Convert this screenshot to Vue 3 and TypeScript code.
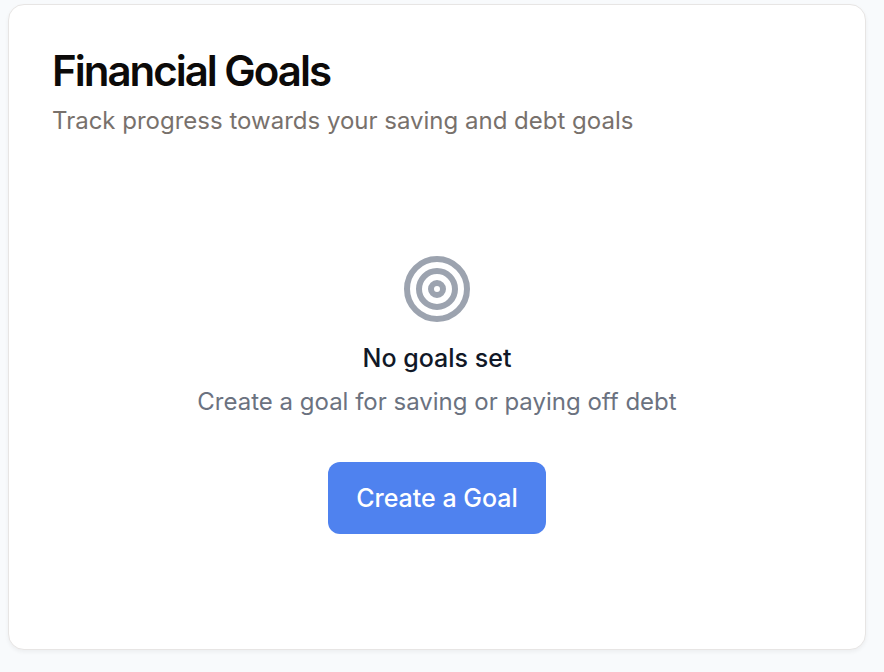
<script setup lang="ts">
const title: string = 'Financial Goals'
const rings: number[] = [10, 6, 2]
</script>

<template>
  <main class="page">
    <section class="card" aria-labelledby="goals-title">
      <header class="card-header">
        <h1 id="goals-title" class="title">{{ title }}</h1>
        <p class="subtitle">Track progress towards your saving and debt goals</p>
      </header>
      <div class="empty">
        <svg class="icon" viewBox="0 0 24 24" fill="none" stroke="currentColor" stroke-width="2" aria-hidden="true">
          <circle v-for="r in rings" :key="r" cx="12" cy="12" :r="r" />
        </svg>
        <h2 class="empty-title">No goals set</h2>
        <p class="empty-text">Create a goal for saving or paying off debt</p>
        <button type="button" class="action">Create a Goal</button>
      </div>
    </section>
  </main>
</template>

<style>
body {
  background: #f8fafc;
}
</style>

<style scoped>
.page {
  box-sizing: border-box;
  min-height: 100vh;
  padding: 4px 18px 22px 8px;
  display: flex;
  font-family: Inter, "Liberation Sans", sans-serif;
}
.card {
  box-sizing: border-box;
  flex: 1;
  padding: 44px 43px;
  background: #fff;
  border: 1px solid #e7e5e4;
  border-radius: 16px;
  box-shadow: 0 2px 4px rgba(0, 0, 0, 0.05);
}
.title {
  margin: 0;
  font-size: 42px;
  line-height: 44px;
  font-weight: 600;
  letter-spacing: -2px;
  color: #0c0a09;
}
.subtitle {
  margin: 10px 0 0;
  font-size: 24px;
  line-height: 36px;
  color: #78716c;
}
.empty {
  display: flex;
  flex-direction: column;
  align-items: center;
  padding-top: 114px;
  text-align: center;
}
.icon {
  width: 72px;
  height: 72px;
  color: #9ca3af;
}
.empty-title {
  margin: 15px 0 0;
  font-size: 25px;
  line-height: 36px;
  font-weight: 500;
  color: #111827;
}
.empty-text {
  margin: 8px 0 0;
  font-size: 24px;
  line-height: 36px;
  color: #6b7280;
}
.action {
  margin: 42px 0 0;
  padding: 18px 28px;
  border: 0;
  border-radius: 12px;
  background: #4f82ef;
  color: #fff;
  font-family: inherit;
  font-size: 25px;
  line-height: 36px;
  font-weight: 500;
  cursor: pointer;
}
</style>
